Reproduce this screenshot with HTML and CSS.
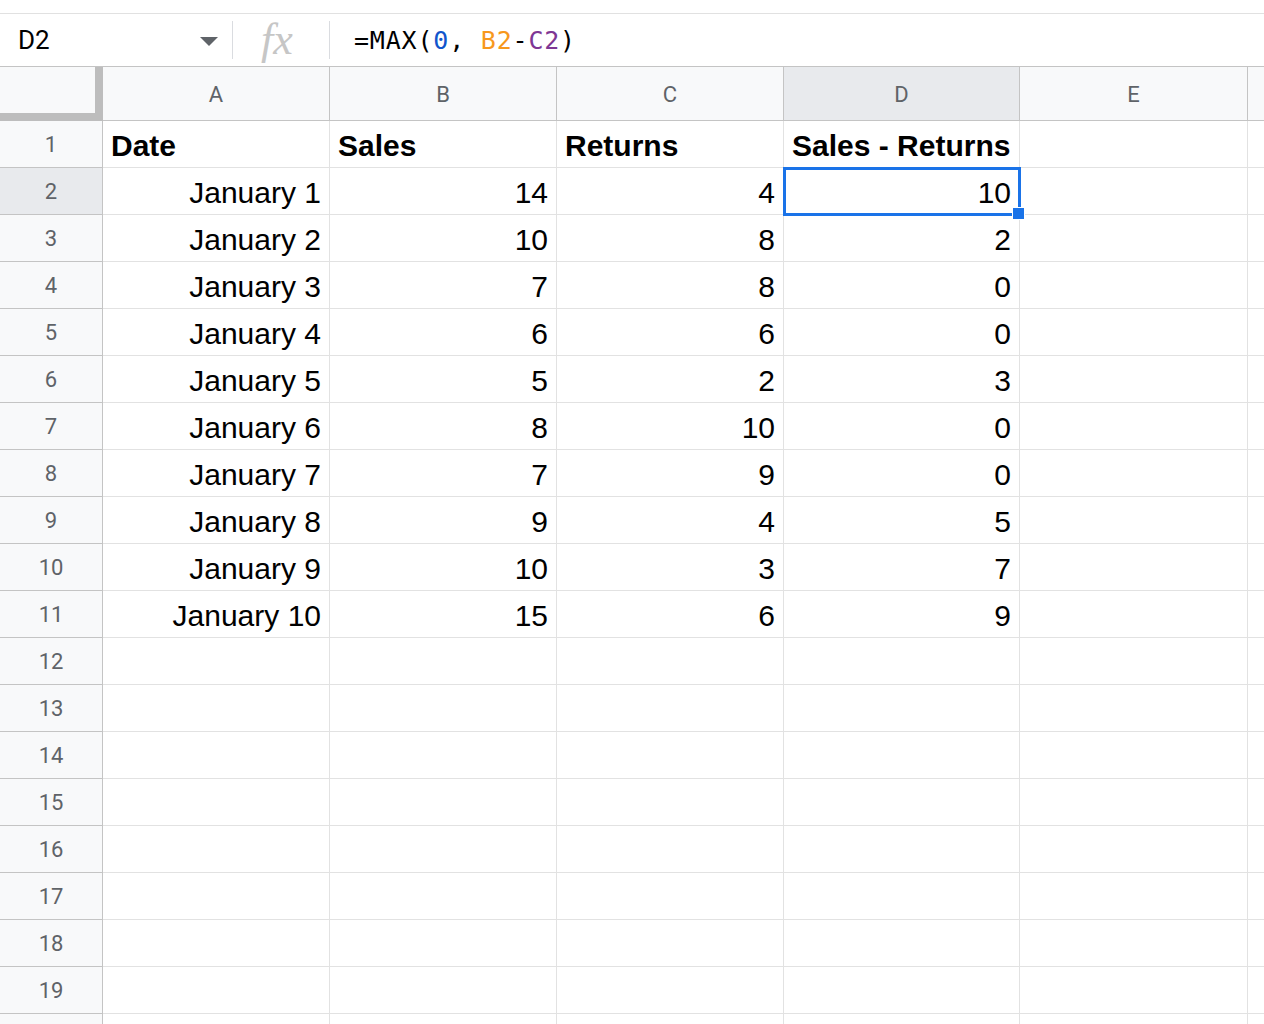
FILE: index.html
```html
<!DOCTYPE html>
<html lang="en">
<head>
    <meta charset="UTF-8">
    <title>Sales - Returns</title>
    <link rel="stylesheet" href="styles.css">
</head>
<body>

    <div class="top-gap"></div>

    <div class="formula-bar">
        <div class="name-box">
            <span class="cell-ref">D2</span>
            <span class="caret"></span>
        </div>
        <div class="fx">fx</div>
        <div class="formula">=MAX(<span class="f-num">0</span>, <span class="f-b">B2</span>-<span class="f-c">C2</span>)</div>
    </div>

    <table class="sheet">
        <colgroup>
            <col class="col-rh">
            <col class="col-a">
            <col class="col-b">
            <col class="col-c">
            <col class="col-d">
            <col class="col-e">
            <col class="col-f">
        </colgroup>
        <thead>
            <tr class="col-heads">
                <th class="corner"></th>
                <th>A</th>
                <th>B</th>
                <th>C</th>
                <th class="active">D</th>
                <th>E</th>
                <th></th>
            </tr>
        </thead>
        <tbody>
            <tr><th>1</th><td class="bold">Date</td><td class="bold">Sales</td><td class="bold">Returns</td><td class="bold">Sales - Returns</td><td></td><td></td></tr>
            <tr><th class="active">2</th><td class="num">January 1</td><td class="num">14</td><td class="num">4</td><td class="num selected">10<span class="handle"></span></td><td></td><td></td></tr>
            <tr><th>3</th><td class="num">January 2</td><td class="num">10</td><td class="num">8</td><td class="num">2</td><td></td><td></td></tr>
            <tr><th>4</th><td class="num">January 3</td><td class="num">7</td><td class="num">8</td><td class="num">0</td><td></td><td></td></tr>
            <tr><th>5</th><td class="num">January 4</td><td class="num">6</td><td class="num">6</td><td class="num">0</td><td></td><td></td></tr>
            <tr><th>6</th><td class="num">January 5</td><td class="num">5</td><td class="num">2</td><td class="num">3</td><td></td><td></td></tr>
            <tr><th>7</th><td class="num">January 6</td><td class="num">8</td><td class="num">10</td><td class="num">0</td><td></td><td></td></tr>
            <tr><th>8</th><td class="num">January 7</td><td class="num">7</td><td class="num">9</td><td class="num">0</td><td></td><td></td></tr>
            <tr><th>9</th><td class="num">January 8</td><td class="num">9</td><td class="num">4</td><td class="num">5</td><td></td><td></td></tr>
            <tr><th>10</th><td class="num">January 9</td><td class="num">10</td><td class="num">3</td><td class="num">7</td><td></td><td></td></tr>
            <tr><th>11</th><td class="num">January 10</td><td class="num">15</td><td class="num">6</td><td class="num">9</td><td></td><td></td></tr>
            <tr><th>12</th><td></td><td></td><td></td><td></td><td></td><td></td></tr>
            <tr><th>13</th><td></td><td></td><td></td><td></td><td></td><td></td></tr>
            <tr><th>14</th><td></td><td></td><td></td><td></td><td></td><td></td></tr>
            <tr><th>15</th><td></td><td></td><td></td><td></td><td></td><td></td></tr>
            <tr><th>16</th><td></td><td></td><td></td><td></td><td></td><td></td></tr>
            <tr><th>17</th><td></td><td></td><td></td><td></td><td></td><td></td></tr>
            <tr><th>18</th><td></td><td></td><td></td><td></td><td></td><td></td></tr>
            <tr><th>19</th><td></td><td></td><td></td><td></td><td></td><td></td></tr>
            <tr><th></th><td></td><td></td><td></td><td></td><td></td><td></td></tr>
        </tbody>
    </table>

</body>
</html>
```

FILE: styles.css
```css
html, body {
    margin: 0;
    background: #ffffff;
    overflow: hidden;
}
body {
    width: 1264px;
    height: 1024px;
    font-family: "Liberation Sans", Arial, sans-serif;
}

.top-gap {
    height: 13px;
}

/* Formula bar */
.formula-bar {
    display: flex;
    align-items: center;
    height: 52px;
    border-top: 1px solid #e1e1e1;
    border-bottom: 1px solid #c4c4c4;
}
.name-box {
    display: flex;
    align-items: center;
    justify-content: space-between;
    width: 233px;
    height: 38px;
    padding-left: 18px;
    padding-right: 14px;
    border-right: 1px solid #dadce0;
    box-sizing: border-box;
}
.cell-ref {
    font-family: Roboto, "Liberation Sans", sans-serif;
    font-size: 26px;
    color: #000;
}
.caret {
    width: 0;
    height: 0;
    border-left: 9px solid transparent;
    border-right: 9px solid transparent;
    border-top: 9px solid #5f6368;
    margin-top: 3px;
}
.fx {
    width: 97px;
    height: 38px;
    line-height: 38px;
    padding-left: 28px;
    box-sizing: border-box;
    border-right: 1px solid #dadce0;
    font-family: "Liberation Serif", "Times New Roman", serif;
    font-style: italic;
    font-size: 44px;
    color: #c6c6c6;
}
.formula {
    padding-left: 24px;
    font-family: "DejaVu Sans Mono", "Liberation Mono", monospace;
    font-size: 25px;
    color: #000;
    letter-spacing: 0.8px;
}
.f-num { color: #1155cc; }
.f-b { color: #f7981d; }
.f-c { color: #7e3794; }

/* Grid */
.sheet {
    border-collapse: separate;
    border-spacing: 0;
    table-layout: fixed;
    width: 1290px;
}
.col-rh { width: 103px; }
.col-a { width: 227px; }
.col-b { width: 227px; }
.col-c { width: 227px; }
.col-d { width: 236px; }
.col-e { width: 228px; }
.col-f { width: 42px; }

.sheet th,
.sheet td {
    box-sizing: border-box;
    height: 47px;
    padding: 0 8px;
    border-right: 1px solid #e2e2e2;
    border-bottom: 1px solid #e2e2e2;
    white-space: nowrap;
    overflow: visible;
}
.sheet td {
    font-size: 30px;
    color: #000;
    padding-top: 4px;
}
.sheet td.bold {
    font-weight: bold;
}
.sheet td.num {
    text-align: right;
}

/* Headers */
.sheet th {
    background: #f8f9fa;
    color: #5f6368;
    font-family: Roboto, "Liberation Sans", sans-serif;
    font-weight: normal;
    font-size: 22px;
    text-align: center;
    border-color: #c4c4c4;
}
.col-heads th {
    height: 54px;
    padding-top: 2px;
}
.sheet tbody th {
    border-right: 1px solid #c4c4c4;
    border-bottom: 1px solid #c4c4c4;
}
.sheet th.active {
    background: #e8eaed;
}
.sheet th.corner {
    background: #f8f9fa;
    border-right: 8px solid #bdbdbd;
    border-bottom: 8px solid #bdbdbd;
}

/* Selection */
.sheet td.selected {
    position: relative;
    outline: 3px solid #1a73e8;
    outline-offset: -2px;
}
.handle {
    position: absolute;
    right: -6px;
    bottom: -6px;
    width: 11px;
    height: 11px;
    background: #1a73e8;
    border: 1px solid #fff;
}
```
